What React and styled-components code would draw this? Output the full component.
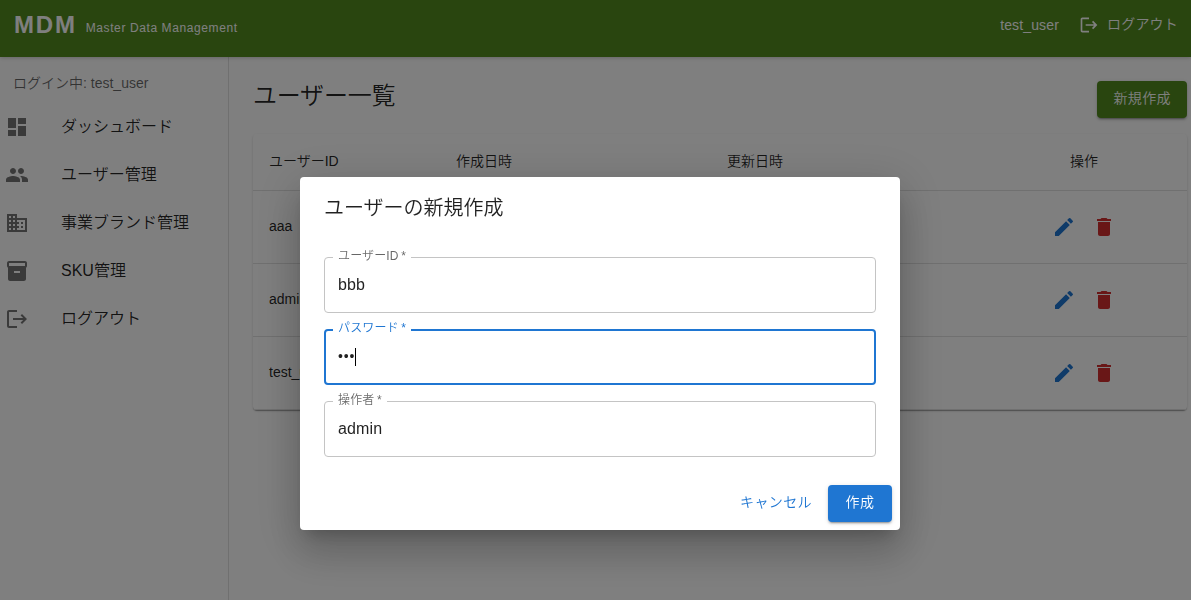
import React from 'react';
import styled, { createGlobalStyle } from 'styled-components';
import {
  MdDashboard,
  MdPeople,
  MdBusiness,
  MdInventory2,
  MdLogout,
  MdEdit,
  MdDelete,
} from 'react-icons/md';

const GlobalStyle = createGlobalStyle`
  * {
    box-sizing: border-box;
  }

  body {
    margin: 0;
    overflow: hidden;
    background: #fff;
    color: rgba(0, 0, 0, 0.87);
    font-family: 'Liberation Sans', 'Noto Sans CJK JP', sans-serif;
    font-weight: 350;
    font-size: 16px;
    line-height: 1.5;
  }
`;

const Page = styled.div`
  display: flex;
  flex-direction: column;
  height: 100vh;
`;

const AppBar = styled.header`
  display: flex;
  justify-content: space-between;
  height: 57px;
  padding: 0 13px 0 14px;
  color: #fff;
  background: #528b1f;
  box-shadow: 0 1px 4px rgba(0, 0, 0, 0.2);
  z-index: 1;
`;

const Brand = styled.div`
  display: flex;
  align-items: baseline;
  gap: 9px;
  padding-top: 7px;
`;

const BrandName = styled.span`
  font-size: 24px;
  font-weight: 700;
  letter-spacing: 1.8px;
`;

const BrandNote = styled.span`
  padding-bottom: 1px;
  transform: translateY(-1px);
  font-size: 12px;
  letter-spacing: 0.6px;
`;

const HeaderActions = styled.div`
  display: flex;
  align-items: center;
  height: 50px;
  font-size: 14px;
`;

const UserName = styled.span`
  margin-right: 20px;
  letter-spacing: 0.14px;
`;

const LogoutButton = styled.button`
  display: flex;
  align-items: center;
  gap: 8px;
  padding: 0;
  border: 0;
  background: none;
  color: inherit;
  font: inherit;
  letter-spacing: 0.2px;

  svg {
    font-size: 20px;
  }
`;

const ButtonLabel = styled.span`
  display: block;
  padding-bottom: 2px;
`;

const Body = styled.div`
  display: flex;
  flex: 1;
`;

const Sidebar = styled.nav`
  width: 229px;
  padding-top: 15px;
  border-right: 1px solid rgba(0, 0, 0, 0.12);
`;

const LoginInfo = styled.p`
  margin: 0 0 9px;
  padding-left: 13px;
  color: rgba(0, 0, 0, 0.6);
  font-size: 14px;
  line-height: 22px;
`;

const MenuItem = styled.a`
  display: flex;
  align-items: center;
  gap: 32px;
  height: 48px;
  padding-left: 5px;

  svg {
    flex: none;
    font-size: 24px;
    color: rgba(0, 0, 0, 0.54);
  }
`;

const Main = styled.main`
  flex: 1;
  padding: 24px 4px 0 24px;
`;

const TitleRow = styled.div`
  display: flex;
  justify-content: space-between;
  align-items: flex-start;
  height: 53px;
`;

const PageTitle = styled.h1`
  margin: 0;
  font-size: 24px;
  font-weight: 350;
  line-height: 30px;
  letter-spacing: -0.2px;
`;

const Button = styled.button`
  height: 37px;
  min-width: 64px;
  padding: 0 16px;
  border: 0;
  border-radius: 4px;
  background: ${props => props.$bg || 'transparent'};
  color: ${props => props.$color || '#fff'};
  box-shadow: ${props => props.$bg
    ? '0 3px 1px -2px rgba(0, 0, 0, 0.2), 0 2px 2px rgba(0, 0, 0, 0.14), 0 1px 5px rgba(0, 0, 0, 0.12)'
    : 'none'};
  font: inherit;
  font-size: 14px;
  letter-spacing: 0.4px;
`;

const TableCard = styled.div`
  border-radius: 4px;
  box-shadow: 0 2px 1px -1px rgba(0, 0, 0, 0.2), 0 1px 1px rgba(0, 0, 0, 0.14), 0 1px 3px rgba(0, 0, 0, 0.12);
`;

const TableRow = styled.div`
  display: grid;
  grid-template-columns: 187px 271px 270px 206px;
  align-items: center;
  height: ${props => (props.$head ? '57px' : '73px')};
  border-bottom: 1px solid #e0e0e0;
  font-size: 14px;
`;

const Cell = styled.div`
  padding: 0 16px 2px;
  text-align: ${props => (props.$center ? 'center' : 'left')};
`;

const ActionCell = styled.div`
  display: flex;
  justify-content: center;
`;

const IconButton = styled.button`
  display: flex;
  padding: 8px;
  border: 0;
  background: none;
  color: ${props => props.$color};

  svg {
    font-size: 24px;
  }
`;

const Backdrop = styled.div`
  position: fixed;
  inset: 0;
  z-index: 10;
  padding: 177px 0 0 300px;
  background: rgba(0, 0, 0, 0.5);
`;

const Dialog = styled.form`
  width: 600px;
  height: 353px;
  border-radius: 4px;
  background: #fff;
  box-shadow: 0 11px 15px -7px rgba(0, 0, 0, 0.2), 0 24px 38px 3px rgba(0, 0, 0, 0.14), 0 9px 46px 8px rgba(0, 0, 0, 0.12);
`;

const DialogTitle = styled.h2`
  margin: 0;
  padding: 15px 24px 33px;
  font-size: 20px;
  font-weight: 350;
  line-height: 32px;
`;

const Fields = styled.div`
  display: flex;
  flex-direction: column;
  gap: 16px;
  padding: 0 24px;
`;

const Field = styled.div`
  position: relative;
  display: flex;
  align-items: center;
  height: 56px;
  padding: 0 ${props => (props.$focused ? 12 : 13)}px;
  border: ${props => (props.$focused ? '2px solid #1f76d2' : '1px solid #c4c4c4')};
  border-radius: 4px;
  letter-spacing: 0.15px;
`;

const FieldLabel = styled.label`
  position: absolute;
  top: ${props => (props.$focused ? -13 : -12)}px;
  left: ${props => (props.$focused ? 7 : 8)}px;
  padding: 0 5px;
  background: #fff;
  color: ${props => (props.$focused ? '#1f76d2' : 'rgba(0, 0, 0, 0.6)')};
  font-size: 12px;
  line-height: 20px;
`;

const Dots = styled.span`
  padding-bottom: 1px;
  font-size: 14px;
  letter-spacing: 0.85px;
`;

const Caret = styled.span`
  width: 1px;
  height: 18px;
  background: #000;
`;

const Actions = styled.div`
  display: flex;
  justify-content: flex-end;
  align-items: center;
  padding: 28px 8px 8px;
`;

const menu = [
  { icon: MdDashboard, label: 'ダッシュボード' },
  { icon: MdPeople, label: 'ユーザー管理' },
  { icon: MdBusiness, label: '事業ブランド管理' },
  { icon: MdInventory2, label: 'SKU管理' },
  { icon: MdLogout, label: 'ログアウト' },
];

const users = ['aaa', 'admin', 'test_user'];

const fields = [
  { label: 'ユーザーID', value: 'bbb' },
  { label: 'パスワード', value: '•••', focused: true },
  { label: '操作者', value: 'admin' },
];

const UserTable = () => (
  <TableCard>
    <TableRow $head>
      <Cell>ユーザーID</Cell>
      <Cell>作成日時</Cell>
      <Cell>更新日時</Cell>
      <Cell $center>操作</Cell>
    </TableRow>
    {users.map(user => (
      <TableRow key={user}>
        <Cell>{user}</Cell>
        <Cell />
        <Cell />
        <ActionCell>
          <IconButton $color="#1f76d2">
            <MdEdit />
          </IconButton>
          <IconButton $color="#d32f2f">
            <MdDelete />
          </IconButton>
        </ActionCell>
      </TableRow>
    ))}
  </TableCard>
);

const CreateUserDialog = () => (
  <Backdrop>
    <Dialog>
      <DialogTitle>ユーザーの新規作成</DialogTitle>
      <Fields>
        {fields.map(({ label, value, focused }) => (
          <Field key={label} $focused={focused}>
            <FieldLabel $focused={focused}>{label}&thinsp;*</FieldLabel>
            {focused ? <Dots>{value}</Dots> : <span>{value}</span>}
            {focused && <Caret />}
          </Field>
        ))}
      </Fields>
      <Actions>
        <Button type="button" $color="#1f76d2">
          <ButtonLabel>キャンセル</ButtonLabel>
        </Button>
        <Button type="button" $bg="#1f76d2">
          <ButtonLabel>作成</ButtonLabel>
        </Button>
      </Actions>
    </Dialog>
  </Backdrop>
);

const App = () => (
  <>
    <GlobalStyle />
    <Page>
      <AppBar>
        <Brand>
          <BrandName>MDM</BrandName>
          <BrandNote>Master Data Management</BrandNote>
        </Brand>
        <HeaderActions>
          <UserName>test_user</UserName>
          <LogoutButton>
            <MdLogout />
            <ButtonLabel>ログアウト</ButtonLabel>
          </LogoutButton>
        </HeaderActions>
      </AppBar>
      <Body>
        <Sidebar>
          <LoginInfo>ログイン中: test_user</LoginInfo>
          {menu.map(({ icon: Icon, label }) => (
            <MenuItem key={label}>
              <Icon />
              <span>{label}</span>
            </MenuItem>
          ))}
        </Sidebar>
        <Main>
          <TitleRow>
            <PageTitle>ユーザー一覧</PageTitle>
            <Button $bg="#528b1f">
              <ButtonLabel>新規作成</ButtonLabel>
            </Button>
          </TitleRow>
          <UserTable />
        </Main>
      </Body>
    </Page>
    <CreateUserDialog />
  </>
);

export default App;
